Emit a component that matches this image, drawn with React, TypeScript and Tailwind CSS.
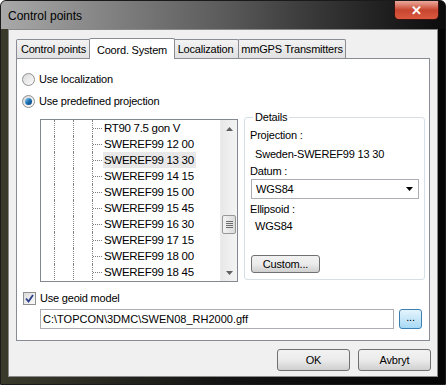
import React from "react";

const ui = { fontFamily: '"Liberation Sans", Arial, sans-serif' };

const projections = [
  "RT90 7.5 gon V",
  "SWEREF99 12 00",
  "SWEREF99 13 30",
  "SWEREF99 14 15",
  "SWEREF99 15 00",
  "SWEREF99 15 45",
  "SWEREF99 16 30",
  "SWEREF99 17 15",
  "SWEREF99 18 00",
  "SWEREF99 18 45",
];

const tabs = ["Control points", "Coord. System", "Localization", "mmGPS Transmitters"];
const tabWidths = ["w-[75px]", "w-[86px]", "w-[67px]", "w-[108px]"];

const Radio = ({ checked }: { checked?: boolean }) => (
  <span className="w-[13px] h-[13px] rounded-full border border-[#8e8f8f] bg-gradient-to-br from-[#d8d8d8] to-[#fdfdfd] flex items-center justify-center shrink-0">
    {checked && (
      <span className="w-[7px] h-[7px] rounded-full bg-gradient-to-br from-[#8ad2f5] via-[#1b71b4] to-[#0c3d6e]" />
    )}
  </span>
);

const ScrollArrow = ({ up }: { up?: boolean }) => (
  <div className="h-[17px] flex items-center justify-center">
    <svg width="7" height="4" viewBox="0 0 7 4">
      {up ? <path d="M0 4 L3.5 0 L7 4 Z" fill="#606060" /> : <path d="M0 0 L3.5 4 L7 0 Z" fill="#606060" />}
    </svg>
  </div>
);

const WinButton = ({ children, className = "" }: { children: React.ReactNode; className?: string }) => (
  <button
    className={
      "rounded-[3px] border border-[#707070] bg-gradient-to-b from-[#f2f2f2] via-[#ebebeb] to-[#cfcfcf] text-black flex items-center justify-center shrink-0 " +
      className
    }
  >
    {children}
  </button>
);

export default function App() {
  return (
    <div
      style={ui}
      className="w-[446px] h-[385px] flex flex-col overflow-hidden rounded-t-[6px] border border-[#1a1a1a] bg-gradient-to-r from-[#3b3b2c] via-[#141414] to-[#050505]"
    >
      {/* title bar */}
      <div className="h-[28px] shrink-0 flex items-start justify-between bg-gradient-to-r from-[#a9a9a9] via-[#5b5b5b] to-[#0c0c0c]">
        <span className="pl-[7px] pt-[6px] text-[12px] text-black">Control points</span>
        <div className="mr-[6px] w-[45px] h-[19px] rounded-b-[5px] border border-t-0 border-[#3b1410] bg-gradient-to-b from-[#e9a99c] via-[#c8452f] to-[#d9593f] flex items-center justify-center">
          <span className="text-white text-[13px] font-bold leading-none">✕</span>
        </div>
      </div>

      {/* client area */}
      <div className="mx-[7px] flex-1 bg-[#f0f0f0] border border-[#8a8a8a] flex flex-col text-[11px] tracking-[-0.2px]">
        {/* tab strip */}
        <div className="pl-[7px] pt-[7px] flex items-end h-[28px] shrink-0">
          {tabs.map((t, i) =>
            i === 1 ? (
              <div
                key={t}
                className={`${tabWidths[i]} -mx-[2px] h-[21px] relative z-10 -mb-[1px] border border-b-0 border-[#898c95] bg-white text-black whitespace-nowrap flex items-start justify-center pt-[3px] rounded-t-[2px]`}
              >
                {t}
              </div>
            ) : (
              <div
                key={t}
                className={`${tabWidths[i]} h-[19px] border border-b-0 border-[#898c95] bg-gradient-to-b from-[#f3f3f3] to-[#e1e1e1] text-black whitespace-nowrap flex items-center justify-center rounded-t-[2px] ${i === 0 ? "" : "-ml-[1px]"}`}
              >
                {t}
              </div>
            )
          )}
        </div>

        {/* tab panel */}
        <div className="ml-[7px] mr-[7px] h-[283px] shrink-0 border border-[#898c95] bg-white flex flex-col">
          <div className="mt-[12px] ml-[5px] flex items-center gap-[4px] h-[16px]">
            <Radio />
            <span className="text-black">Use localization</span>
          </div>
          <div className="mt-[6px] ml-[5px] flex items-center gap-[4px] h-[16px]">
            <Radio checked />
            <span className="text-black">Use predefined projection</span>
          </div>

          <div className="mt-[8px] flex items-start">
            {/* tree */}
            <div className="ml-[23px] mt-[2px] w-[198px] h-[163px] border border-[#828790] bg-white flex">
              <div className="flex-1 flex flex-col overflow-hidden">
                {projections.map((p, i) => (
                  <div key={p} className="h-[16px] shrink-0 flex items-stretch">
                    <div className="w-[13px]" />
                    <div className="w-[19px] border-l border-dotted border-[#808080]" />
                    <div className="w-[19px] border-l border-dotted border-[#808080]" />
                    <div className="w-[11px] border-l border-dotted border-[#808080] flex items-center">
                      <div className="w-[9px] border-t border-dotted border-[#808080]" />
                    </div>
                    <div
                      className={`pl-[1px] pr-[2px] text-[11.5px] leading-[16px] text-black tracking-[-0.3px] whitespace-nowrap ${i === 2 ? "bg-[#e8e8e8]" : ""}`}
                    >
                      {p}
                    </div>
                  </div>
                ))}
              </div>
              {/* scrollbar */}
              <div className="w-[17px] bg-gradient-to-r from-[#e8e8e8] to-[#f4f4f4] border-l border-[#ececec] flex flex-col">
                <ScrollArrow up />
                <div className="flex-1 flex flex-col">
                  <div className="h-[78px]" />
                  <div className="mx-[1px] h-[19px] rounded-[2px] border border-[#979797] bg-gradient-to-r from-[#f2f2f2] to-[#dcdcdc] flex flex-col items-center justify-center gap-[1px]">
                    <div className="w-[7px] border-t border-[#6d6d6d]" />
                    <div className="w-[7px] border-t border-[#6d6d6d]" />
                    <div className="w-[7px] border-t border-[#6d6d6d]" />
                    <div className="w-[7px] border-t border-[#6d6d6d]" />
                  </div>
                </div>
                <ScrollArrow />
              </div>
            </div>

            {/* details group */}
            <div className="ml-[6px] w-[181px] h-[163px] border border-[#d5dfe5] rounded-[3px] flex flex-col px-[5px]">
              <span className="-mt-[9px] ml-[3px] px-[2px] self-start bg-white leading-[16px] text-black">
                Details
              </span>
              <span className="mt-[2px] leading-[16px] text-black">Projection :</span>
              <span className="mt-[3px] ml-[5px] leading-[16px] text-black">Sweden-SWEREF99 13 30</span>
              <span className="mt-[1px] leading-[16px] text-black">Datum :</span>
              <div className="ml-[1px] w-[168px] h-[20px] border border-[#abadb3] bg-white flex items-center justify-between pl-[4px] pr-[5px]">
                <span className="text-black">WGS84</span>
                <svg width="7" height="4" viewBox="0 0 7 4">
                  <path d="M0 0 L3.5 4 L7 0 Z" fill="#000" />
                </svg>
              </div>
              <span className="mt-[2px] leading-[16px] text-black">Ellipsoid :</span>
              <span className="mt-[1px] ml-[5px] leading-[16px] text-black">WGS84</span>
              <WinButton className="mt-[21px] ml-[1px] w-[69px] h-[18px]">Custom...</WinButton>
            </div>
          </div>

          <div className="mt-[8px] ml-[6px] flex items-center gap-[4px] h-[16px]">
            <span className="w-[13px] h-[13px] border border-[#8e8f8f] bg-gradient-to-br from-[#dcdcdc] to-[#fafafa] flex items-center justify-center">
              <svg width="9" height="9" viewBox="0 0 9 9">
                <path d="M1 4.5 L3.5 7.5 L8 1" stroke="#2a3f8a" strokeWidth="1.8" fill="none" />
              </svg>
            </span>
            <span className="text-black">Use geoid model</span>
          </div>

          <div className="mt-[3px] ml-[23px] flex items-center">
            <div className="w-[354px] h-[20px] border border-[#abadb3] bg-white flex items-center pl-[2px] text-black tracking-normal">
              C:\TOPCON\3DMC\SWEN08_RH2000.gff
            </div>
            <button className="ml-[5px] w-[23px] h-[20px] rounded-[3px] border border-[#3c7fb1] bg-gradient-to-b from-[#e5f4fc] to-[#a7d9f5] leading-none text-black flex items-center justify-center pb-[4px]">
              ...
            </button>
          </div>
        </div>

        {/* dialog buttons */}
        <div className="mt-[8px] mr-[6px] flex justify-end gap-[8px]">
          <WinButton className="w-[73px] h-[22px]">OK</WinButton>
          <WinButton className="w-[73px] h-[22px]">Avbryt</WinButton>
        </div>
      </div>
      <div className="h-[7px] shrink-0" />
    </div>
  );
}
